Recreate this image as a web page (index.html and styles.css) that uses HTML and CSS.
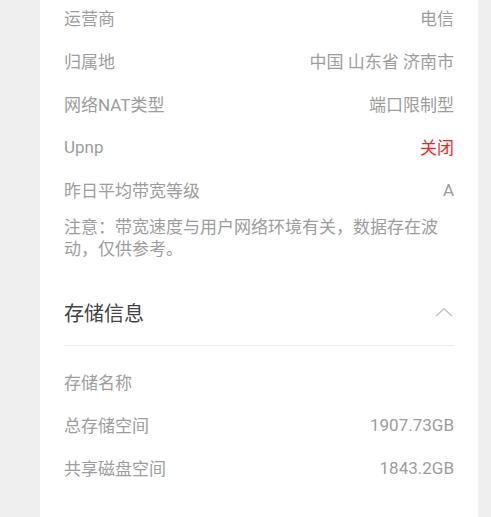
FILE: index.html
```html
<!DOCTYPE html>
<html>
<head>
    <meta charset="utf-8">
    <title>设备信息</title>
    <link rel="stylesheet" href="styles.css">
</head>
<body>
    <div class="card">
        <div class="info-list top">
            <div class="row"><span class="label">运营商</span><span class="value">电信</span></div>
            <div class="row"><span class="label">归属地</span><span class="value">中国 山东省 济南市</span></div>
            <div class="row"><span class="label">网络NAT类型</span><span class="value">端口限制型</span></div>
            <div class="row"><span class="label">Upnp</span><span class="value off">关闭</span></div>
            <div class="row"><span class="label">昨日平均带宽等级</span><span class="value">A</span></div>
        </div>
        <p class="note">注意：带宽速度与用户网络环境有关，数据存在波动，仅供参考。</p>

        <div class="section-header">
            <h2>存储信息</h2>
            <svg class="chevron" width="18" height="10" viewBox="0 0 18 10">
                <polyline points="1,9 9,1.5 17,9" fill="none" stroke="#bdbdbd" stroke-width="1.2"/>
            </svg>
        </div>
        <div class="info-list storage">
            <div class="row"><span class="label">存储名称</span><span class="value"></span></div>
            <div class="row"><span class="label">总存储空间</span><span class="value">1907.73GB</span></div>
            <div class="row"><span class="label">共享磁盘空间</span><span class="value">1843.2GB</span></div>
        </div>
    </div>
</body>
</html>
```

FILE: styles.css
```css
body {
    font-family: Roboto, "Noto Sans CJK SC", sans-serif;
    background-color: #efefef;
    margin: 0;
    padding: 0 0 0 40px;
    min-height: 100vh;
    overflow: hidden;
}

.card {
    display: flow-root;
    width: 438px;
    min-height: 100vh;
    background-color: #fff;
    padding: 0 24px;
    box-sizing: border-box;
}

.info-list.top {
    margin-top: -4px;
}

.row {
    display: flex;
    justify-content: space-between;
    align-items: center;
    height: 43px;
    font-size: 17px;
    color: #9d9d9d;
}

.value.off {
    color: #ff1f1f;
}

.note {
    margin: 5px 0 0;
    font-size: 17px;
    line-height: 22px;
    color: #9d9d9d;
}

.section-header {
    display: flex;
    justify-content: space-between;
    align-items: center;
    height: 66px;
    margin-top: 19px;
    border-bottom: 1px solid #ececec;
}

.section-header h2 {
    margin: 0;
    font-size: 20px;
    font-weight: normal;
    color: #444;
}

.chevron {
    margin-right: 1px;
}

.info-list.storage {
    margin-top: 14px;
}
```
